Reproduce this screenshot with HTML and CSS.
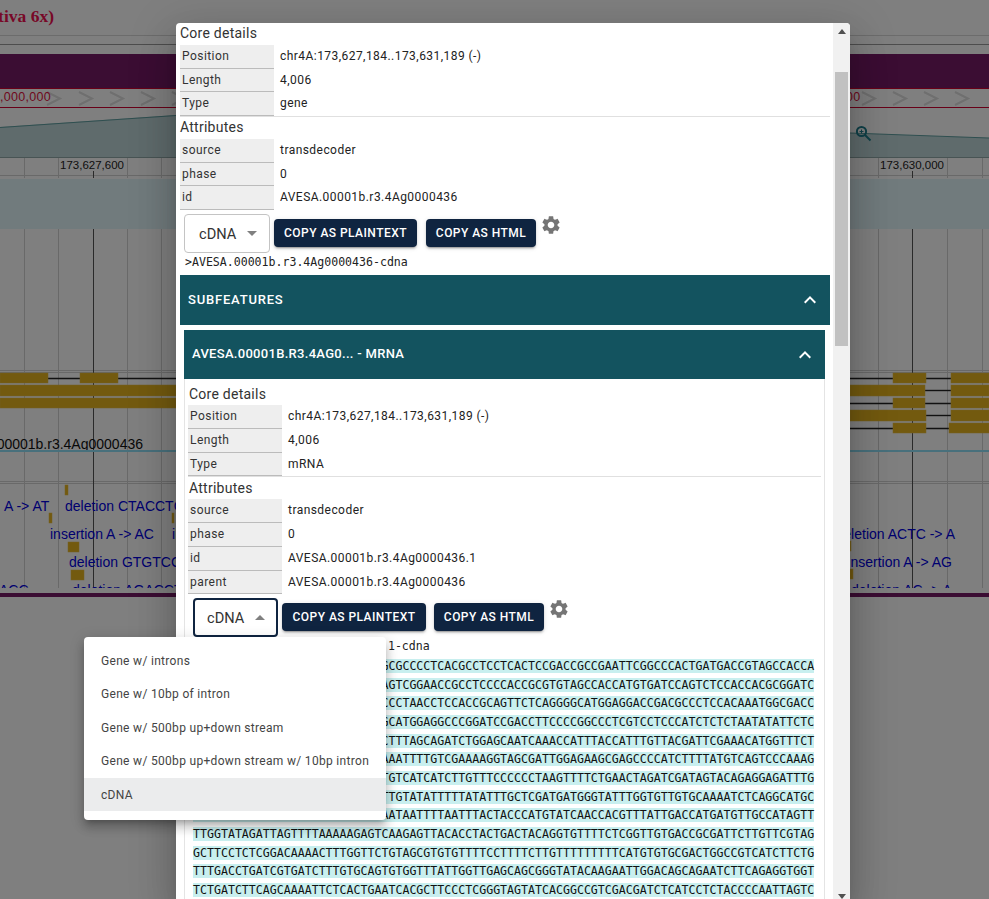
FILE: index.html
```html
<!DOCTYPE html>
<html lang="en">

<head>
    <meta charset="UTF-8">
    <meta name="viewport" content="width=device-width, initial-scale=1.0">
    <title>Feature details</title>
    <link rel="stylesheet" href="styles.css">
</head>

<body>
    <!-- genome browser behind the dialog -->
    <svg class="browser" width="989" height="899" viewBox="0 0 989 899">
        <text class="assembly-title" x="54" y="22" text-anchor="end">tiva 6x)</text>
        <line class="hr-soft" x1="0" y1="35.5" x2="989" y2="35.5" />
        <line class="hr-dark" x1="0" y1="44.5" x2="989" y2="44.5" />
        <rect class="overview" x="0" y="54" width="989" height="34" />
        <line class="hr-red" x1="0" y1="88.5" x2="989" y2="88.5" />
        <line class="hr-red" x1="0" y1="107.5" x2="989" y2="107.5" />
        <g class="chevrons">
            <polyline points="47,92 60,98.5 47,105" />
            <polyline points="79,92 92,98.5 79,105" />
            <polyline points="110,92 123,98.5 110,105" />
            <polyline points="141,92 154,98.5 141,105" />
            <polyline points="172,92 185,98.5 172,105" />
            <polyline points="862,92 875,98.5 862,105" />
            <polyline points="893,92 906,98.5 893,105" />
            <polyline points="924,92 937,98.5 924,105" />
            <polyline points="955,92 968,98.5 955,105" />
        </g>
        <text class="overview-label" x="51" y="101" text-anchor="end">0,000,000</text>
        <text class="overview-label" x="846" y="101">00</text>

        <polygon class="zoom-wedge" points="0,127 176,115 176,157 0,157" />
        <polygon class="zoom-wedge" points="850,133 989,138 989,157 850,157" />
        <line class="wedge-edge" x1="0" y1="127.5" x2="176" y2="115.5" />
        <line class="wedge-edge" x1="850" y1="133" x2="989" y2="138" />
        <line class="wedge-base" x1="0" y1="157.5" x2="989" y2="157.5" />
        <g class="zoom-icon">
            <circle cx="861.5" cy="131.5" r="4.6" />
            <line x1="865" y1="135" x2="870.5" y2="140.5" />
            <line class="thin" x1="859.5" y1="131.5" x2="863.5" y2="131.5" />
            <line class="thin" x1="861.5" y1="129.5" x2="861.5" y2="133.5" />
        </g>

        <g class="grid">
            <line x1="24.5" y1="158" x2="24.5" y2="178" />
            <line x1="58.5" y1="158" x2="58.5" y2="178" />
            <line x1="127.5" y1="158" x2="127.5" y2="178" />
            <line x1="161.5" y1="158" x2="161.5" y2="178" />
            <line x1="878.5" y1="158" x2="878.5" y2="178" />
            <line x1="947.5" y1="158" x2="947.5" y2="178" />
            <line x1="982.5" y1="158" x2="982.5" y2="178" />
            <line x1="24.5" y1="229" x2="24.5" y2="593" />
            <line x1="58.5" y1="229" x2="58.5" y2="593" />
            <line x1="127.5" y1="229" x2="127.5" y2="593" />
            <line x1="161.5" y1="229" x2="161.5" y2="593" />
            <line x1="878.5" y1="229" x2="878.5" y2="593" />
            <line x1="947.5" y1="229" x2="947.5" y2="593" />
            <line x1="982.5" y1="229" x2="982.5" y2="593" />
            <line x1="0" y1="175.5" x2="989" y2="175.5" />
            <line x1="0" y1="370.5" x2="989" y2="370.5" />
            <line x1="0" y1="372.5" x2="989" y2="372.5" />
            <line x1="0" y1="481.5" x2="989" y2="481.5" />
            <line x1="0" y1="483.5" x2="989" y2="483.5" />
        </g>
        <rect class="ruler-band" x="0" y="179" width="989" height="50" />
        <g class="grid-major">
            <line x1="93.5" y1="171" x2="93.5" y2="178" />
            <line x1="912.5" y1="171" x2="912.5" y2="178" />
            <line x1="93.5" y1="229" x2="93.5" y2="593" />
            <line x1="912.5" y1="229" x2="912.5" y2="593" />
        </g>
        <text class="ruler-label" x="92" y="169" text-anchor="middle">173,627,600</text>
        <text class="ruler-label" x="912" y="169" text-anchor="middle">173,630,000</text>

        <g class="intron">
            <line x1="0" y1="378.5" x2="176" y2="378.5" />
            <line x1="850" y1="378.5" x2="989" y2="378.5" />
            <line x1="925" y1="390.5" x2="951" y2="390.5" />
            <line x1="850" y1="403.5" x2="989" y2="403.5" />
            <line x1="925" y1="415.5" x2="951" y2="415.5" />
            <line x1="850" y1="428.5" x2="989" y2="428.5" />
        </g>
        <g class="exon">
            <rect x="0" y="373" width="48" height="10" />
            <rect x="80" y="373" width="38" height="10" />
            <rect x="0" y="385" width="176" height="11" />
            <rect x="0" y="398" width="176" height="10" />
            <rect x="893" y="373" width="33" height="10" />
            <rect x="951" y="373" width="38" height="10" />
            <rect x="850" y="385" width="75" height="11" />
            <rect x="951" y="385" width="38" height="11" />
            <rect x="893" y="398" width="32" height="10" />
            <rect x="951" y="398" width="38" height="10" />
            <rect x="850" y="410" width="76" height="11" />
            <rect x="951" y="410" width="38" height="11" />
            <rect x="893" y="423" width="33" height="10" />
            <rect x="949" y="423" width="40" height="10" />
            <rect x="65" y="485" width="3" height="10" />
            <rect x="49" y="513" width="3" height="10" />
            <rect x="172" y="513" width="2" height="10" />
            <rect x="68" y="542" width="11" height="10" />
            <rect x="71" y="570" width="13" height="10" />
            <rect x="850" y="541" width="1" height="10" />
            <rect x="850" y="569" width="3" height="10" />
        </g>
        <text class="gene-label" x="143" y="449" text-anchor="end">00001b.r3.4Ag0000436</text>
        <line class="gene-line" x1="0" y1="451" x2="989" y2="451" />

        <g class="variant">
            <text x="4" y="511">A -&gt; AT</text>
            <text x="65" y="511">deletion CTACCTC</text>
            <text x="50" y="539">insertion A -&gt; AC</text>
            <text x="172" y="539">i</text>
            <text x="69" y="567">deletion GTGTCC</text>
            <text x="-1" y="595">ACC</text>
            <text x="72" y="595">deletion AGACCT</text>
            <text x="955" y="539" text-anchor="end">deletion ACTC -&gt; A</text>
            <text x="952" y="567" text-anchor="end">insertion A -&gt; AG</text>
            <text x="851" y="595">deletion AC -&gt; A</text>
        </g>
        <rect class="track-clip" x="0" y="588" width="989" height="5" />
        <rect class="overview" x="0" y="593" width="989" height="4" />
    </svg>

    <div class="scrim"></div>

    <div class="dialog">
        <div class="dialog-content">
            <div class="details-title">Core details</div>
            <div class="kv-row"><div class="kv-name">Position</div><div class="kv-value">chr4A:173,627,184..173,631,189 (-)</div></div>
            <div class="kv-row"><div class="kv-name">Length</div><div class="kv-value">4,006</div></div>
            <div class="kv-row"><div class="kv-name">Type</div><div class="kv-value">gene</div></div>
            <div class="divider"></div>
            <div class="details-title">Attributes</div>
            <div class="kv-row"><div class="kv-name">source</div><div class="kv-value">transdecoder</div></div>
            <div class="kv-row"><div class="kv-name">phase</div><div class="kv-value">0</div></div>
            <div class="kv-row"><div class="kv-name">id</div><div class="kv-value">AVESA.00001b.r3.4Ag0000436</div></div>

            <div class="seq-toolbar">
                <div class="seq-select"><span>cDNA</span><i class="arrow-down"></i></div>
                <button type="button" class="copy-button plaintext">Copy as plaintext</button>
                <button type="button" class="copy-button html">Copy as HTML</button>
                <svg class="gear" viewBox="0 0 24 24"><path d="M19.14 12.94c.04-.3.06-.61.06-.94 0-.32-.02-.64-.07-.94l2.03-1.58c.18-.14.23-.41.12-.61l-1.92-3.32c-.12-.22-.37-.29-.59-.22l-2.39.96c-.5-.38-1.03-.7-1.62-.94l-.36-2.54c-.04-.24-.24-.41-.48-.41h-3.84c-.24 0-.43.17-.47.41l-.36 2.54c-.59.24-1.13.57-1.62.94l-2.39-.96c-.22-.08-.47 0-.59.22L2.74 8.87c-.12.21-.08.47.12.61l2.03 1.58c-.05.3-.09.63-.09.94s.02.64.07.94l-2.03 1.58c-.18.14-.23.41-.12.61l1.92 3.32c.12.22.37.29.59.22l2.39-.96c.5.38 1.03.7 1.62.94l.36 2.54c.05.24.24.41.48.41h3.84c.24 0 .44-.17.47-.41l.36-2.54c.59-.24 1.13-.56 1.62-.94l2.39.96c.22.08.47 0 .59-.22l1.92-3.32c.12-.22.07-.47-.12-.61l-2.01-1.58zM12 15.6c-1.98 0-3.6-1.62-3.6-3.6s1.62-3.6 3.6-3.6 3.6 1.62 3.6 3.6-1.62 3.6-3.6 3.6z"/></svg>
            </div>
            <div class="seq-name">&gt;AVESA.00001b.r3.4Ag0000436-cdna</div>

            <div class="accordion-head">
                <span>Subfeatures</span>
                <svg viewBox="0 0 24 24"><path d="M12 8l-6 6 1.41 1.41L12 10.83l4.59 4.58L18 14z"/></svg>
            </div>

            <div class="subfeature">
                <div class="accordion-head">
                    <span>AVESA.00001b.r3.4Ag0... - mRNA</span>
                    <svg viewBox="0 0 24 24"><path d="M12 8l-6 6 1.41 1.41L12 10.83l4.59 4.58L18 14z"/></svg>
                </div>
                <div class="subfeature-body">
                    <div class="details-title">Core details</div>
                    <div class="kv-row"><div class="kv-name">Position</div><div class="kv-value">chr4A:173,627,184..173,631,189 (-)</div></div>
                    <div class="kv-row"><div class="kv-name">Length</div><div class="kv-value">4,006</div></div>
                    <div class="kv-row"><div class="kv-name">Type</div><div class="kv-value">mRNA</div></div>
                    <div class="divider"></div>
                    <div class="details-title">Attributes</div>
                    <div class="kv-row"><div class="kv-name">source</div><div class="kv-value">transdecoder</div></div>
                    <div class="kv-row"><div class="kv-name">phase</div><div class="kv-value">0</div></div>
                    <div class="kv-row"><div class="kv-name">id</div><div class="kv-value">AVESA.00001b.r3.4Ag0000436.1</div></div>
                    <div class="kv-row"><div class="kv-name">parent</div><div class="kv-value">AVESA.00001b.r3.4Ag0000436</div></div>

                    <div class="seq-toolbar">
                        <div class="seq-select open"><span>cDNA</span><i class="arrow-up"></i></div>
                        <button type="button" class="copy-button plaintext">Copy as plaintext</button>
                        <button type="button" class="copy-button html">Copy as HTML</button>
                        <svg class="gear" viewBox="0 0 24 24"><path d="M19.14 12.94c.04-.3.06-.61.06-.94 0-.32-.02-.64-.07-.94l2.03-1.58c.18-.14.23-.41.12-.61l-1.92-3.32c-.12-.22-.37-.29-.59-.22l-2.39.96c-.5-.38-1.03-.7-1.62-.94l-.36-2.54c-.04-.24-.24-.41-.48-.41h-3.84c-.24 0-.43.17-.47.41l-.36 2.54c-.59.24-1.13.57-1.62.94l-2.39-.96c-.22-.08-.47 0-.59.22L2.74 8.87c-.12.21-.08.47.12.61l2.03 1.58c-.05.3-.09.63-.09.94s.02.64.07.94l-2.03 1.58c-.18.14-.23.41-.12.61l1.92 3.32c.12.22.37.29.59.22l2.39-.96c.5.38 1.03.7 1.62.94l.36 2.54c.05.24.24.41.48.41h3.84c.24 0 .44-.17.47-.41l.36-2.54c.59-.24 1.13-.56 1.62-.94l2.39.96c.22.08.47 0 .59-.22l1.92-3.32c.12-.22.07-.47-.12-.61l-2.01-1.58zM12 15.6c-1.98 0-3.6-1.62-3.6-3.6s1.62-3.6 3.6-3.6 3.6 1.62 3.6 3.6-1.62 3.6-3.6 3.6z"/></svg>
                    </div>
                    <div class="seq-name">&gt;AVESA.00001b.r3.4Ag0000436.1-cdna</div>
                    <div class="seq-lines"><span>ATGGCGTCCACCGCCGTCGCCGCCGCCGCGCCCCTCACGCCTCCTCACTCCGACCGCCGAATTCGGCCCACTGATGACCGTAGCCACCACCACCATCGACGACGACGACCTCCTCCAGTCGGAACCGCCTCCCCACCGCGTGTAGCCACCATGTGATCCAGTCTCCACCACGCGGATCGGATCCGCTCCTCGCCGGCGTGCTCGACCCTAACCTCCACCGCAGTTCTCAGGGGCATGGAGGACCGACGCCCTCCACAAATGGCGACCTCGCCTCCGGTCTCCGGCCTCCTCCCGGCATGGAGGCCCGGATCCGACCTTCCCCGGCCCTCGTCCTCCCATCTCTCTAATATATTCTCTAGATTCGTGTTCGATTCGCTTGGTTCCTTTAGCAGATCTGGAGCAATCAAACCATTTACCATTTGTTACGATTCGAAACATGGTTTCTCGATCTGTTTGGAGTTTCTGAGCTCAAAAATTTTGTCGAAAAGGTAGCGATTGGAGAAGCGAGCCCCATCTTTTATGTCAGTCCCAAAGGCTTAGGTTGCATTCTTTTGCCAATTTTGTCATCATCTTGTTTCCCCCCTAAGTTTTCTGAACTAGATCGATAGTACAGAGGAGATTTGTGTTGCTTGATTCGTTTAGGAGTTATATTGTATATTTTTATATTTGCTCGATGATGGGTATTTGGTGTTGTGCAAAATCTCAGGCATGCATTGATGTTTCTCATGTTGATCTTGTTAATAATTTTAATTTACTACCCATGTATCAACCACGTTTATTGACCATGATGTTGCCATAGTTTTGGTATAGATTAGTTTTAAAAAGAGTCAAGAGTTACACCTACTGACTACAGGTGTTTTCTCGGTTGTGACCGCGATTCTTGTTCGTAGGCTTCCTCTCGGACAAAACTTTGGTTCTGTAGCGTGTGTTTTCCTTTTCTTGTTTTTTTTTCATGTGTGCGACTGGCCGTCATCTTCTGTTTGACCTGATCGTGATCTTTGTGCAGTGTGGTTTATTGGTTGAGCAGCGGGTATACAAGAATTGGACAGCAGAATCTTCAGAGGTGGTTCTGATCTTCAGCAAAATTCTCACTGAATCACGCTTCCCTCGGGTAGTATCACGGCCGTCGACGATCTCATCCTCTACCCCAATTAGTC</span></div>
                </div>
            </div>
        </div>

        <div class="scrollbar">
            <i class="scroll-up"></i>
            <div class="scroll-thumb"></div>
            <i class="scroll-down"></i>
        </div>
    </div>

    <ul class="select-menu">
        <li>Gene w/ introns</li>
        <li>Gene w/ 10bp of intron</li>
        <li>Gene w/ 500bp up+down stream</li>
        <li>Gene w/ 500bp up+down stream w/ 10bp intron</li>
        <li class="selected">cDNA</li>
    </ul>
</body>

</html>
```

FILE: styles.css
```css
html,
body {
    height: 100%;
}

body {
    margin: 0;
    overflow: hidden;
    background-color: #fff;
    font-family: Roboto, Arial, sans-serif;
    color: #222;
}

/* genome view, drawn on its own canvas */
.browser {
    position: absolute;
    left: 0;
    top: 0;
    font-family: "Liberation Sans", Arial, sans-serif;
}

.assembly-title {
    font-family: "Liberation Serif", serif;
    font-weight: bold;
    font-size: 17.5px;
    fill: #f01050;
}

.hr-soft {
    stroke: #d8d8d8;
}

.hr-dark {
    stroke: #9a9a9a;
}

.hr-red {
    stroke: #d00030;
}

.overview {
    fill: #761a66;
}

.chevrons polyline {
    fill: none;
    stroke: #dedede;
    stroke-width: 2;
}

.overview-label {
    font-size: 12.5px;
    fill: #e01040;
    letter-spacing: 0.3px;
}

.zoom-wedge {
    fill: #bed6d8;
}

.wedge-edge {
    stroke: #5f9ea0;
    stroke-width: 1.2;
}

.wedge-base {
    stroke: #90a8a8;
}

.zoom-icon circle,
.zoom-icon line {
    fill: none;
    stroke: #1f8090;
    stroke-width: 2;
}

.zoom-icon .thin {
    stroke-width: 1;
}

.grid line {
    stroke: #d2d2d2;
}

.grid-major line {
    stroke: #555;
}

.ruler-band {
    fill: #e2f6fa;
}

.ruler-label {
    font-size: 11.5px;
    fill: #222;
}

.intron line {
    stroke: #222;
    stroke-width: 1.4;
}

.exon rect {
    fill: #e6b41e;
    stroke: #e8c04a;
    stroke-width: 0.5;
}

.gene-label {
    font-size: 14px;
    fill: #111;
}

.gene-line {
    stroke: #90e0f8;
    stroke-width: 2;
}

.variant text {
    font-size: 14px;
    fill: #0000e0;
}

.track-clip {
    fill: #fff;
}

/* dim layer */
.scrim {
    position: absolute;
    inset: 0;
    background-color: rgba(0, 0, 0, 0.5);
}

.dialog {
    position: absolute;
    left: 176px;
    top: 23px;
    width: 674px;
    height: 876px;
    display: flex;
    overflow: hidden;
    background-color: #fff;
    border-radius: 4px 4px 0 0;
    box-shadow: 0 11px 15px -7px rgba(0, 0, 0, 0.2), 0 24px 38px 3px rgba(0, 0, 0, 0.14), 0 9px 46px 8px rgba(0, 0, 0, 0.12);
}

.dialog-content {
    width: 657px;
    flex: none;
    padding: 0 3px 0 4px;
    box-sizing: border-box;
    overflow: hidden;
}

.scrollbar {
    width: 17px;
    flex: none;
    display: flex;
    flex-direction: column;
    align-items: center;
    background-color: #f1f1f1;
}

.scroll-up {
    margin-top: 6px;
    border: 4px solid transparent;
    border-top: 0;
    border-bottom: 5px solid #505050;
}

.scroll-thumb {
    width: 13px;
    height: 274px;
    margin-top: 38px;
    background-color: #c1c1c1;
}

.scroll-down {
    margin-top: auto;
    border: 4px solid transparent;
    border-bottom: 0;
    border-top: 5px solid #505050;
}

.details-title {
    height: 22px;
    line-height: 21px;
    font-size: 14px;
    letter-spacing: 0.25px;
    color: #333;
}

.kv-row {
    display: flex;
    height: 23.7px;
    font-size: 12px;
    letter-spacing: 0.45px;
    line-height: 22px;
}

.kv-name {
    width: 94px;
    box-sizing: border-box;
    padding-left: 2px;
    background-color: #eee;
    border-bottom: 1px solid #bbb;
    color: #333;
}

.kv-value {
    padding-left: 6px;
    color: #222;
}

.divider {
    height: 1px;
    background-color: #e0e0e0;
}

.seq-toolbar {
    display: flex;
    align-items: flex-start;
    padding: 4px 0 0 4px;
}

.seq-select {
    width: 86px;
    height: 39px;
    box-sizing: border-box;
    display: flex;
    align-items: center;
    padding-left: 14px;
    border: 1px solid #c4c4c4;
    border-radius: 4px;
    font-size: 14.6px;
    color: #333;
}

.seq-select.open {
    width: 85px;
    border: 2px solid #0f2440;
    padding-left: 12px;
}

.arrow-down,
.arrow-up {
    margin-left: 11px;
    border: 5px solid transparent;
}

.arrow-down {
    border-top-color: #808080;
    border-bottom: 0;
}

.arrow-up {
    border-bottom-color: #808080;
    border-top: 0;
}

.copy-button {
    height: 28px;
    margin-top: 5px;
    margin-left: 4px;
    padding: 0;
    border: none;
    border-radius: 4px;
    background-color: #0f2440;
    color: #fff;
    font-family: Roboto, Arial, sans-serif;
    font-size: 12px;
    font-weight: 500;
    letter-spacing: 0.45px;
    text-transform: uppercase;
    box-shadow: 0 3px 1px -2px rgba(0, 0, 0, 0.2), 0 2px 2px 0 rgba(0, 0, 0, 0.14), 0 1px 5px 0 rgba(0, 0, 0, 0.12);
}

.copy-button.plaintext {
    width: 144px;
}

.copy-button.html {
    width: 110px;
    margin-left: 8px;
}

.dialog-content > .seq-toolbar .copy-button.plaintext {
    width: 143px;
}

.dialog-content > .seq-toolbar .copy-button.html {
    margin-left: 9px;
}

.gear {
    width: 22px;
    height: 22px;
    margin: 0 0 0 4px;
    fill: #757575;
}

.seq-name {
    height: 14px;
    margin: 2px 0 0 5px;
    font-family: "DejaVu Sans Mono", monospace;
    font-size: 11.57px;
    line-height: 14px;
    color: #222;
}

.accordion-head {
    display: flex;
    align-items: center;
    justify-content: space-between;
    height: 50px;
    margin-top: 6px;
    padding: 0 8px;
    background-color: #13535f;
    color: #fff;
    font-size: 13px;
    font-weight: 500;
    letter-spacing: 0.8px;
    text-transform: uppercase;
}

.accordion-head span {
    margin-bottom: 2px;
}

.accordion-head svg {
    width: 24px;
    height: 24px;
    fill: #fff;
}

.subfeature {
    width: 641px;
    margin-left: 4px;
    margin-top: 5px;
}

.subfeature .accordion-head {
    height: 49px;
    margin: 0;
    letter-spacing: 0.3px;
}

.subfeature-body {
    padding: 4px 3px 0 3px;
    border-left: 1px solid #e4e4e4;
    border-right: 1px solid #e4e4e4;
}

.subfeature-body .details-title {
    padding-left: 1px;
    line-height: 22.5px;
}

.subfeature-body .kv-row {
    height: 23.75px;
}

.subfeature-body .seq-toolbar {
    padding: 3.7px 0 0 5px;
}

.seq-lines {
    width: 89ch;
    margin: 4px 0 0 5px;
    font-family: "DejaVu Sans Mono", monospace;
    font-size: 11.6px;
    line-height: 18.67px;
    word-break: break-all;
    color: #111;
}

.seq-lines span {
    background-color: #c8efef;
}

/* open select list */
.select-menu {
    position: absolute;
    left: 84px;
    top: 637px;
    width: 302px;
    margin: 0;
    padding: 7px 0 9px;
    box-sizing: border-box;
    list-style: none;
    background-color: #fff;
    border-radius: 4px;
    box-shadow: 0 5px 5px -3px rgba(0, 0, 0, 0.2), 0 8px 10px 1px rgba(0, 0, 0, 0.14), 0 3px 14px 2px rgba(0, 0, 0, 0.12);
}

.select-menu li {
    height: 33.4px;
    padding-left: 17px;
    line-height: 34.5px;
    font-size: 12px;
    letter-spacing: 0.31px;
    color: #444;
}

.select-menu .selected {
    background-color: #ebeced;
}
```
